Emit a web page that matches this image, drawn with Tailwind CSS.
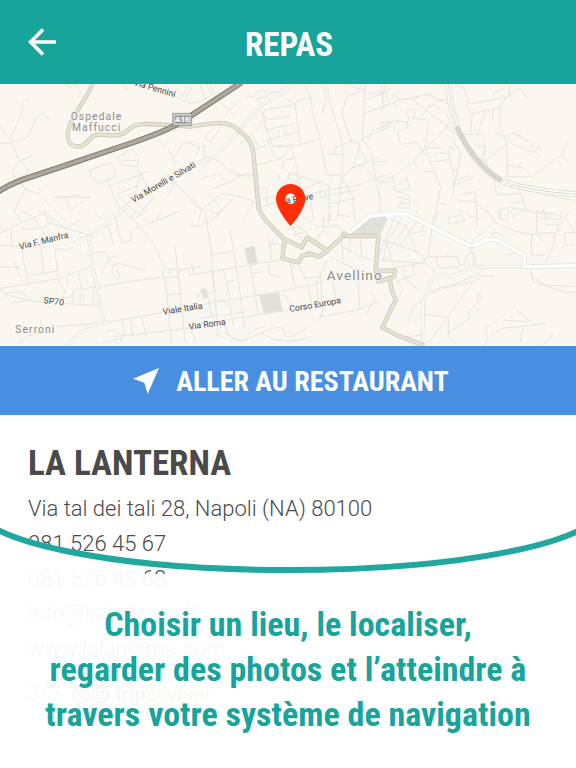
<!DOCTYPE html>
<html lang="fr">

<head>
    <meta charset="UTF-8" />
    <meta name="viewport" content="width=device-width, initial-scale=1.0" />
    <title>Repas</title>
    <script src="https://cdn.jsdelivr.net/npm/@tailwindcss/browser@4"></script>
</head>

<body class="min-h-screen flex flex-col bg-white font-['Roboto',sans-serif] text-[#4a4a4a]">
    <header class="relative h-21 flex items-center justify-center bg-[#16a49b] text-white">
        <button type="button" aria-label="Retour" class="absolute left-7 top-7">
            <svg class="size-7" viewBox="0 0 28 28" fill="none" stroke="currentColor" stroke-width="3.6">
                <path d="M28 14H3M15 1.4L2.6 14 15 26.6" />
            </svg>
        </button>
        <h1 class="pt-1.5 pl-0.5 text-[33px] leading-10 font-bold font-['Roboto_Condensed','Liberation_Sans_Narrow',sans-serif]">REPAS</h1>
    </header>

    <!-- Map -->
    <svg class="block w-full bg-[#faf7f0]" viewBox="0 0 1728 786" fill="none" role="img" aria-label="Avellino">
        <!-- Parks and blocks -->
        <g fill="#dfe0d9">
            <path d="M733 492l31-6 9 50-30 4zM777 634l60-8 11 56-55 10zM604 616l15-2 4 26-15 2z" />
            <path d="M1048 452l65-50 55-8-24 52-40 8zM908 508l14-8 24 8-34 4z" />
        </g>

        <!-- Side streets -->
        <g stroke="#e6e4df" stroke-width="3" stroke-linejoin="round">
            <g transform="translate(0 -12)">
                <path d="M0 140l35 45 20 50 35 40-45 25-8-25 25-35M88 58l-20 10-2 35-36 72M0 190h30l25-10 30-10 20-50 20-23 25 25M62 240l35-12M60 305l15 22-32 65 15 28M75 327l40 13 50 52 30 28M115 340l25-25M165 352h105M165 352l75-7M195 12l15 10 20-10M225 12l22 35M238 160v-40M195 350l15 45M210 395l40-30M270 270l60-22 12 12 4 32-45 18-30-25zM320 297l40 90M335 315l110-40M350 235l45-30 20 25v30l-50-5zM360 240l50 2M350 342l65-25M410 262l50 90M375 370l-20-25M375 370l45 35M395 350l45 50M370 12l10 18M470 175l50 55 30-40M520 230l5 30M545 190l45-5M505 210l15 20M490 270l110 120M420 285l-20 70M460 352l-50 60M500 350l30-45M550 45l15-33M530 25l20 25M490 12l40 40 40 18 30-5M555 60l20-40M470 420l20-30" />
            </g>
            <g transform="translate(570 -12)">
                <path d="M50 12l15 33-40 22M60 12l20 48 60 52M145 60l-25 30-75 80 15 18 50-70M170 50l20 2 15-20h20l5 20-30 2 20 25M230 52l10-15h25l20-20M205 85l20 30-40 50-35 25M190 100l15 10M220 90l90-15M280 52l35 20 15 115M315 65l50-12M222 122l80-15M225 150l85-18M220 95l5 45 25 60 50-5M235 180l90-25M265 172v-20M290 165l-5-18M250 200l75-5 65-17M345 12l15 40 15 75 15 50 20 105 20 22M395 12l15 35-15 60M410 12l15 75 32 100v90l-5 40-10 100M305 197l22 95 8 55M305 197l-30 38-50 15-30 3M315 235l-30 5-10 20 20 20 30 10M270 280l-5 15 20 15 15-30M295 285l15-8 20 10-10 20-25-10zM330 290l60 15 30 15M325 350l90-20 90-15 95-35M335 330l60-25M390 330v22h16v-15M410 285h45M435 200h20M415 223h40M440 200l-8 20M190 210l40-15M230 178l25 50M205 200l-15-30M450 195l35-10 25 5-5 30-20 45-30 30 35 60 5 75M485 265l50-20 35-15M550 245h45M465 12l40 15 15-12M525 15l-8 165 25 30 30 160-10 50M520 175l80-35M525 100l75-30M525 60l75-30M540 40l40-5-3 35M585 12l5 50 10 10M520 30l-50 20-15 50 30 90M530 190l20-40 50-15M562 300l-45-45-35 10M562 310l38-5M510 210l20 35M0 190l30 10-10 25M40 195l5 40M30 12l15 45M70 232l70 55 50-5M70 235l-30 25M125 270l50 25 15-10M35 295l50-15 25 30-50 20M110 310l40-20M0 340l35 50-10 30M35 390l60-50 60 10 50 20M60 340l30 45M190 330l35-5M210 360l45-12M215 380l45-12M130 355l-60 60M205 330l10 80M230 320v60M160 420l30-50M360 345l10 75M415 320l5 100M420 345l80-15M420 370l80-15" />
            </g>
            <g transform="translate(1140 -12)">
                <path d="M5 12l5 70-10 10M0 85l60-25 35-3 45-15 30 15 35 15M60 60l-15-15H35M60 60l90-18 20 18h35M95 57l45 35 65 48M140 92l-17 18M135 85l30-10 35 28 8 20-15 25M45 70l7 12M0 140l50-18M0 128l60-5 20 5M80 128l10-15a13 13 0 1 1 5 0l30 5 15 2M80 128l5 10-33 18 10 37 50-7 23 40M42 138v20M145 128l-10 78 73-70M135 206L105 240l-65 50-40 15M100 243l10 17M135 206l47 115-20 99M135 206l55-5v-10M158 246l50-8M130 275h30M163 220h45M208 235l-4-30 12-5 4 12M208 238l18 60M218 180l25 40-15 75-8 25M205 145l20 15M242 163h60l10 5M220 270h10M225 12l30 15 10 45 115-20 8-8v-32M255 72l22 30-5 60M277 100l85-18M315 92l-23 72M340 88l-3 30M388 44l22-15 10-5 22 30M388 44l20 23M360 75l28-30M360 75v70l20 40 2 105M345 160l15 2 10 15M375 168l40-15M375 168l25 25 60 25 20-20 5 12M400 180l20-20 10 10M400 158l30 20 25 8v20M460 212l20 15M340 55v-18l35-10M380 192l-65 50-15-7M290 197l25 5-10 35M318 180l-5 50M315 242l15 25v20M380 255l55 10M410 262l15-15M380 290h78l87-67 20-37M545 223l5 13 25 20M500 345l75 15 13 10M0 245h15M40 290l5 40 45 20-30 20M50 315l30-22 8 30-40 15M85 320l10 12M50 350l40 10v10H55v14h35M180 370l20 5M110 400l5-30M220 300v50l15 12 50 3 60 55M225 315l60-25M222 302l45-15M235 345l50-10v30M340 290l10 55 75-5 12 50-40 20M390 372l40-8M290 360v60M360 420v-30l30-8 50 10 60 10 20 18M470 395l50 5" />
            </g>
            <g transform="translate(0 378)">
                <path d="M0 70l60-30 70-30M0 45l20 25M60 0l40 20 35 55M115 0l60 50 95 25M130 0l70 60M35 58v50M65 115l20 110M75 45l-10 15 70-8 15-10M120 85l10 100M60 110l-60-5M85 197l90-15M165 120l10 90 20 30-10 40M165 115l35 5 20-10M0 235l60-10 120-20 60-25 35-10M135 0l10 40 25 5M200 55l40-25M215 100l20-15 30-7M0 170l60 3M40 155l10 15 10 35M0 235l20 20 80 20 90 5 110 8M10 250l50-5 35 25-60 8M190 265l30-10v-15l60-8 130-20 70-10M220 280v-30M240 280v-25h10v25M200 205l5 20M235 185l8 50M275 130l45-5 5 22-20 45M325 147l28-10M340 165l20-5 50 15 30 5M325 147l15 18-5 20 15 20M345 185l8-5 5 12-5 20M410 205l5 10M255 135h20M280 235v50M370 0l50 50 40 50 35 75 45 5 60-10M395 60l80-30 70-30M345 20l20 80 30-10-5-30M325 35l15 70M310 40l25 30M385 30l30-30M410 25l30-25M488 180v25l45-5 10-25M510 175v20M525 110l10 85 20 200M495 200l20 195M565 180l5 20M500 255l45-5M313 338l175-30M313 338L170 350M55 400l35-25 45-8M120 330l10 25M315 365l25-5 20 10 5 25M365 325l10 60M340 380l100-10 160-20M390 322l10 60M425 320l15 60M570 360l20 35M365 385l-60 15M560 300l40-5M280 0l25 30" />
            </g>
            <g transform="translate(570 378)">
                <path d="M0 195l180-30 90-15M45 0l20 135 20 250M60 135l70-10M120 60l20 115 25 185M0 45l20 5 50-20 25-25M100 180l15 60 15 110M110 215l25-4M180 165l25 150M185 190l35-5M65 185l10 60M0 290l270-45 130-30M0 345l170-25M30 325l140-20M50 240l15 80M60 0l15 10 20-5M35 235l-10 30M70 270h30l15 20M75 245l-60 10M80 375l30 10M170 320l120-20 100-20M235 80l10 70M235 100l40 5M250 85l-10 30M235 160l5 35 25 3M280 250l20 30M300 155l15 80M325 160l20 45 45-5 20-50M320 180l-20-20M390 200l10 100-10 20M355 230l10 50M380 210l5 80M400 320l100-20 70-25M425 190l15 90M500 170l10 130M540 245l15 25-25 40M350 120l40 20M365 100l40 20M380 90l15 40M290 60l50-15M310 75l40-10M325 50l30 20M300 45l35 45M400 10v40l35-2M400 30h40M415 12v30M340 20l40 30h20M430 40l30 20M440 15l40 5M405 50l-30 45M420 140l80 40M450 105l60 35 40 10M455 90l5 60M480 80v50M510 82l5 55M100 335l15 40 40 20M105 370q40 30 60 20t70-30 50 10 70-20 35-30M215 370q60 40 150 10M165 385q20-30 60-35M5 160l5 30" />
            </g>
            <g transform="translate(1140 378)">
                <path d="M0 90l40 10 80 30M20 20l60 30 30 80M45 20L0 130M65 22L20 100l-10 50M85 40L30 115M110 35L60 110M130 45l-5 20-30 5M160 20l-15 120-15 10 35 40M165 40l10-40M120 130l15 30M0 150l130 10M130 158l-110 20M65 175l15 30M100 165l5 30-55 20 20 20-15 30M45 180l-25-80M75 205l45 40M130 150l15-10h85l10 30-60 5-10-15v-20M200 130v12M240 165h15l5-30h10M265 135l15-10v45M270 110l5 15 10 5v35M205 25l40-10 10 20-50 5zM290 0v50M345 35l-70 60M320 0l30 40 60 25 55 10M310 25l-40-5-30-20M355 0l5 25 20 5 8-30M330 75l15-8 20 5M375 132l20 3 10-10M455 75v60h40M470 75l20 20M525 70l-5 40-25 50M450 175l10 40 90 30 38 3M455 200l40 25 93 5M460 72l70-5 5-30M470 20l60 10 15-10M490 0l10 45h45v-45M470 0v70M510 10l25 5M550 68h38M555 70v35h30M530 60l20-5M575 0l-20 20 30 45M310 175l-20 25-25 5-70 30-40 15M145 250l30-15 110-20M345 200l-40-3-25 20-40 50-35 50 0 60 20 25M310 235l-20 30 20-5-45 45 5 20-65 45M290 245l10 15M130 312l75 10M125 270l-25 20-15 45M205 320l-60 80M315 350l10 40-15 15M312 350l15-3M330 375l40-20 130-15M345 340l30-30M370 330l80 5-40-35M520 370l-30 35M430 350l-10 50M80 380l50-5" />
            </g>
        </g>

        <!-- White roads -->
        <g stroke-linejoin="round">
            <path stroke="#dedcd6" stroke-width="9" d="M870 0l-10 18-90 55-50 65-75 80-75 25-180 115-60 50-65 55 35 200 13 53-53 12-60 58M1575 548h-150l-75 30-45-12-35 82-2 138" />
            <path stroke="#fdfdfb" stroke-width="5" d="M870 0l-10 18-90 55-50 65-75 80-75 25-180 115-60 50-65 55 35 200 13 53-53 12-60 58M1575 548h-150l-75 30-45-12-35 82-2 138" />
            <g fill="#fff" stroke="#dedcd6" stroke-width="2">
                <circle cx="267" cy="463" r="6" />
                <circle cx="300" cy="663" r="6" />
                <circle cx="315" cy="716" r="6" />
                <circle cx="897" cy="276" r="5" />
                <circle cx="1132" cy="296" r="5" />
                <circle cx="17" cy="633" r="5" />
            </g>
            <path stroke="#e3e1dc" stroke-width="14" d="M1040 453l70-57 55-6h55l190 95 20-2 30-18 25 1 87 47 3 35 153-3" />
            <path stroke="#fff" stroke-width="10" d="M1040 453l70-57 55-6h55l190 95 20-2 30-18 25 1 87 47 3 35 153-3" />
            <circle cx="1165" cy="394" r="9" fill="#fff" />
        </g>

        <!-- Dual carriageway -->
        <path stroke="#dcdbd5" stroke-width="18" d="M1346 0q2 60 24 128 50 110 130 160 60 30 228 43" />
        <path stroke="#fdfdfb" stroke-width="13" d="M1346 0q2 60 24 128 50 110 130 160 60 30 228 43" />
        <path stroke="#d8d7d1" stroke-width="3" d="M1346 0q2 60 24 128 50 110 130 160 60 30 228 43" />
        <path stroke="#d9d9d2" stroke-width="14" d="M1370 128q50 110 134 162" />
        <path stroke="#c9c9c2" stroke-width="2" d="M1374 128q50 108 132 158M1366 130q50 110 136 164" />

        <!-- Provincial roads -->
        <g stroke-linejoin="round">
            <path stroke="#cbc8b8" stroke-width="13" d="M278 0C252 60 205 105 203 155c2 40 42 42 65 12 28-34 60 2 105-20 40-32 30-32 197-19 60-10 110-20 140 5 36 30 45 40 50 75l8 82 7 78q5 30 75 95l55 27 17-30 60 40 48-44h105l-8 102 8 35 47-15 3-18h-58M1170 588l5 30 12 30-20 40-20 42 40 22 85 32M855 463l-8 60 48 12 12-20 28-5 23 8 24-18" />
            <path stroke="#e6e3d3" stroke-width="8" d="M278 0C252 60 205 105 203 155c2 40 42 42 65 12 28-34 60 2 105-20 40-32 30-32 197-19 60-10 110-20 140 5 36 30 45 40 50 75l8 82 7 78q5 30 75 95l55 27 17-30 60 40 48-44h105l-8 102 8 35 47-15 3-18h-58M1170 588l5 30 12 30-20 40-20 42 40 22 85 32M855 463l-8 60 48 12 12-20 28-5 23 8 24-18" />
            <circle cx="1032" cy="450" r="7" fill="#e6e3d3" stroke="#cbc8b8" stroke-width="3" />
        </g>

        <!-- Motorway A16 -->
        <path stroke="#7d776e" stroke-width="17" d="M-5 323q30-20 70-35l135-45 200-68q120-40 170-78L724-4" />
        <path stroke="#b0a79c" stroke-width="11" d="M-5 323q30-20 70-35l135-45 200-68q120-40 170-78L724-4" />
        <path fill="#a5a5a0" stroke="#8c8c87" stroke-width="2" d="M518 88h57v37h-57z" />
        <path stroke="#fff" stroke-width="2" d="M522 92h49v29h-49z" />

        <!-- Labels -->
        <g fill="#454545" stroke="#faf7f0" stroke-width="5" stroke-linejoin="round" paint-order="stroke" font-size="26">
            <text x="400" y="2" transform="rotate(17 400 2)">Via Pennini</text>
            <text x="400" y="357" transform="rotate(-30 400 357)">Via Morelli e Silvati</text>
            <text x="60" y="497" transform="rotate(-14 60 497)">Via F. Manfra</text>
            <text x="130" y="657" transform="rotate(7 130 657)">SP70</text>
            <text x="490" y="692" transform="rotate(-9 490 692)">Viale Italia</text>
            <text x="568" y="737" transform="rotate(-8 568 737)">Via Roma</text>
            <text x="870" y="684" transform="rotate(-10 870 684)">Corso Europa</text>
            <text x="836" y="362" transform="rotate(-9 836 362)">Via Piave</text>
        </g>
        <g fill="#8c8c8c" stroke="#faf7f0" stroke-width="5" stroke-linejoin="round" paint-order="stroke" class="tracking-[0.2em]">
            <text x="212" y="108" font-size="31">Ospedale</text>
            <text x="216" y="142" font-size="31">Maffucci</text>
            <text x="46" y="748" font-size="31">Serroni</text>
            <text x="980" y="588" font-size="41">Avellino</text>
        </g>
        <text x="525" y="115" fill="#fff" font-size="24" font-weight="700">A16</text>

        <!-- Pin -->
        <path fill="#ff2d08" fill-rule="evenodd" d="M872 300c-24 0-44 20-44 44 0 34 44 82 44 82s44-48 44-82c0-24-20-44-44-44zm0 28a16 16 0 1 1 0 32 16 16 0 1 1 0-32z" />
    </svg>

    <button type="button" class="h-[69px] pl-1.5 flex items-center justify-center gap-[17px] bg-[#498fe1] text-white">
        <svg class="size-[26px]" viewBox="0 0 78 78" fill="currentColor">
            <path d="M0 32L78 0 44 78 34 44z" />
        </svg>
        <span class="pt-0.5 text-[28px] leading-8 font-bold font-['Roboto_Condensed','Liberation_Sans_Narrow',sans-serif]">ALLER AU RESTAURANT</span>
    </button>

    <main class="relative grow px-7 pt-[29px]">
        <h2 class="text-[35px] leading-10 font-bold font-['Roboto_Condensed','Liberation_Sans_Narrow',sans-serif]">LA LANTERNA</h2>
        <address class="mt-[7px] flex flex-col items-start not-italic text-[22px] leading-[35px] font-light">
            <span>Via tal dei tali 28, Napoli (NA) 80100</span>
            <a href="tel:0815264567">081 526 45 67</a>
            <a href="tel:0815264568">081 526 45 68</a>
            <a href="mailto:info@lalanterna.it">info@lalanterna.it</a>
            <a href="http://www.lalanterna.com">www.lalanterna.com</a>
        </address>
        <div class="mt-2.5 flex items-center text-[22px] leading-[35px] font-light">
            <span class="w-[43px]">3/5</span>
            <svg class="w-10 h-5" viewBox="0 0 120 60" fill="none" stroke="currentColor" stroke-width="7">
                <circle cx="30" cy="33" r="23" />
                <circle cx="88" cy="33" r="23" />
                <circle cx="30" cy="33" r="10" stroke-width="5" />
                <circle cx="88" cy="33" r="10" stroke-width="5" />
                <path d="M0 8h20q38-14 80 0h20" />
            </svg>
            <span class="pl-1 text-xl font-bold">trip<span class="font-medium text-[#589442]">advisor</span></span>
        </div>

        <!-- Caption panel -->
        <section class="absolute inset-x-0 top-[113px] bottom-0 flex flex-col">
            <svg class="w-full h-[46px] shrink-0" viewBox="0 0 576 46" preserveAspectRatio="none" fill="none">
                <path fill="#fff" fill-opacity="0.95" d="M0 4A314 64 0 0 0 576 4V46H168V41H145V46H0z" />
                <ellipse cx="289" cy="-22" rx="314" ry="64" stroke="#20a7a0" stroke-width="6" />
            </svg>
            <p class="grow pt-7 px-4 bg-white/95 text-center text-[34px] leading-[45px] font-bold text-[#16a49b] font-['Roboto_Condensed','Liberation_Sans_Narrow',sans-serif]">
                Choisir un lieu, le localiser,<br />
                regarder des photos et l’atteindre à<br />
                travers votre système de navigation
            </p>
        </section>
    </main>
</body>

</html>
